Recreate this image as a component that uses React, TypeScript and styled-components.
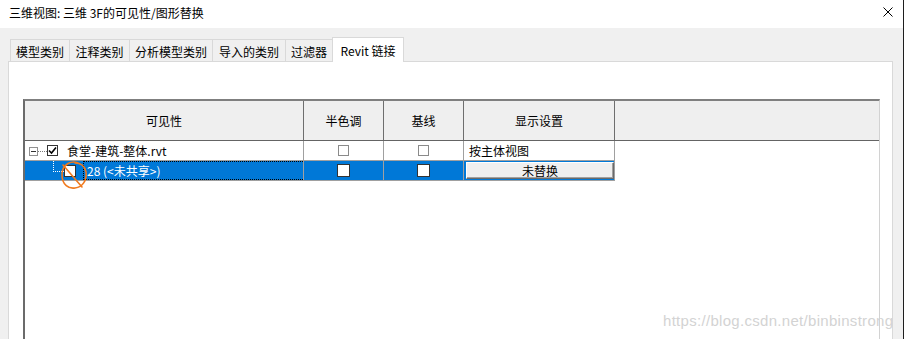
import React from 'react';
import styled, { createGlobalStyle } from 'styled-components';

const GlobalStyle = createGlobalStyle`
  html, body {
    margin: 0;
    padding: 0;
    background: #ffffff;
  }
  body {
    font-family: "Noto Sans CJK SC", "Liberation Sans", sans-serif;
    font-size: 12px;
    color: #000000;
  }
  * {
    box-sizing: border-box;
  }
`;

const COLS = '279px 80px 80px 151px 1fr';

const Window = styled.div`
  position: relative;
  width: 904px;
  height: 339px;
  display: flex;
  flex-direction: column;
  overflow: hidden;
  border-right: 1px solid #1e1e1e;
`;

const TitleBar = styled.div`
  height: 28px;
  flex-shrink: 0;
  display: flex;
  align-items: center;
  justify-content: space-between;
  padding: 0 10px 0 9px;
  background: #ffffff;
`;

const Title = styled.span`
  font-size: 12px;
  line-height: 1;
  margin-top: -2px;
`;

const CloseIcon = styled.svg`
  width: 10px;
  height: 10px;
  margin-top: -4px;
`;

const Body = styled.div`
  flex: 1;
  min-height: 0;
  display: flex;
  flex-direction: column;
  background: #f0f0f0;
  padding: 9px 10px 0 8px;
`;

const TabRow = styled.div`
  height: 25px;
  display: flex;
  align-items: flex-end;
  padding-left: 2px;
  margin-bottom: -1px;
  position: relative;
  z-index: 1;
`;

const Tab = styled.div<{ $width: number; $active?: boolean }>`
  width: ${p => p.$width}px;
  height: ${p => (p.$active ? 25 : 23)}px;
  margin-left: -1px;
  display: flex;
  align-items: center;
  justify-content: center;
  padding-top: ${p => (p.$active ? 0 : 1)}px;
  background: ${p => (p.$active ? '#ffffff' : '#f0f0f0')};
  border: 1px solid #d9d9d9;
  border-bottom: ${p => (p.$active ? 'none' : '1px solid #d9d9d9')};
  font-size: 12px;
  white-space: nowrap;
  &:first-child {
    margin-left: 0;
  }
`;

const Panel = styled.div`
  flex: 1;
  min-height: 0;
  display: flex;
  flex-direction: column;
  background: #ffffff;
  border: 1px solid #d9d9d9;
  border-bottom: none;
  padding: 37px 12px 0 14px;
`;

const Table = styled.div`
  flex: 1;
  display: flex;
  flex-direction: column;
  border-top: 2px solid #7f7f7f;
  border-left: 2px solid #6b6b6b;
  border-right: 1px solid #d2d2d2;
`;

const HeaderRow = styled.div`
  display: grid;
  grid-template-columns: ${COLS};
  height: 40px;
  background: #efefef;
  border-bottom: 1px solid #646464;
`;

const HeaderCell = styled.div<{ $last?: boolean }>`
  display: flex;
  align-items: center;
  justify-content: center;
  border-right: ${p => (p.$last ? 'none' : '1px solid #6e6e6e')};
  font-size: 12px;
`;

const Row = styled.div`
  display: grid;
  grid-template-columns: ${COLS};
  height: 20px;
`;

const Cell = styled.div<{ $selected?: boolean; $align?: 'left' | 'center' }>`
  display: flex;
  align-items: center;
  justify-content: ${p => (p.$align === 'center' ? 'center' : 'flex-start')};
  background: ${p => (p.$selected ? '#0078d7' : '#ffffff')};
  color: ${p => (p.$selected ? '#ffffff' : '#000000')};
  border-right: 1px solid #a0a0a0;
  border-bottom: 1px solid #a0a0a0;
  white-space: nowrap;
  font-size: 12px;
`;

const EmptyCell = styled.div`
  background: #ffffff;
`;

const TreeCell = styled(Cell)`
  padding-left: 4px;
`;

const Expander = styled.div`
  width: 9px;
  height: 9px;
  border: 1px solid #919191;
  background: #ffffff;
  position: relative;
  margin-top: 1px;
  &::after {
    content: '';
    position: absolute;
    left: 1px;
    right: 1px;
    top: 3px;
    height: 1px;
    background: #333333;
  }
`;

const DotLine = styled.div`
  width: 9px;
  height: 0;
  border-top: 1px dotted #7a7a7a;
  margin-top: 1px;
`;

const Branch = styled.div`
  align-self: flex-start;
  width: 11px;
  height: 11px;
  margin-left: 28px;
  border-left: 1px dotted #ffffff;
  border-bottom: 1px dotted #ffffff;
`;

const CheckBox = styled.div<{ $dark?: boolean; $size?: number }>`
  width: ${p => p.$size ?? 11}px;
  height: ${p => p.$size ?? 11}px;
  border: 1px solid ${p => (p.$dark ? '#333333' : '#8a8a8a')};
  background: #ffffff;
  display: flex;
  align-items: center;
  justify-content: center;
  flex-shrink: 0;
`;

const FileName = styled.span`
  margin-left: 9px;
`;

const FocusLabel = styled.div`
  flex: 1;
  align-self: stretch;
  margin-left: 7px;
  border: 1px dotted #000000;
  border-right: none;
  padding-left: 3px;
  display: flex;
  align-items: center;
`;

const DisplayText = styled.span`
  padding-left: 5px;
`;

const OverrideButton = styled.div`
  width: 148px;
  height: 17px;
  margin-left: 2px;
  margin-top: 1px;
  align-self: flex-start;
  display: flex;
  align-items: center;
  justify-content: center;
  background: #efefef;
  color: #000000;
  border: 1px solid;
  border-color: #ffffff #6a6a6a #6a6a6a #ffffff;
  box-shadow: inset -1px -1px 0 #a0a0a0;
  font-size: 12px;
`;

const Annotation = styled.svg`
  position: absolute;
  left: 58px;
  top: 158px;
  width: 32px;
  height: 34px;
  pointer-events: none;
`;

const Watermark = styled.div`
  position: absolute;
  left: 663px;
  top: 312px;
  font-family: "Liberation Sans", Arial, sans-serif;
  font-size: 15px;
  letter-spacing: 0.3px;
  color: #d3d3d3;
  white-space: nowrap;
  pointer-events: none;
`;

const tabs = [
  { label: '模型类别', width: 60 },
  { label: '注释类别', width: 61 },
  { label: '分析模型类别', width: 84 },
  { label: '导入的类别', width: 74 },
  { label: '过滤器', width: 48 },
  { label: 'Revit 链接', width: 72, active: true },
];

const Check = () => (
  <svg width="9" height="9" viewBox="0 0 9 9">
    <path d="M1 4.5 L3.5 7 L8 1.5" fill="none" stroke="#000" strokeWidth="1.6" />
  </svg>
);

const App: React.FC = () => {
  return (
    <>
      <GlobalStyle />
      <Window>
        <TitleBar>
          <Title>三维视图: 三维 3F的可见性/图形替换</Title>
          <CloseIcon viewBox="0 0 10 10">
            <path d="M0.5 0.5 L9.5 9.5 M9.5 0.5 L0.5 9.5" stroke="#000" strokeWidth="1" />
          </CloseIcon>
        </TitleBar>

        <Body>
          <TabRow>
            {tabs.map(t => (
              <Tab key={t.label} $width={t.width} $active={t.active}>
                {t.label}
              </Tab>
            ))}
          </TabRow>

          <Panel>
            <Table>
              <HeaderRow>
                <HeaderCell>可见性</HeaderCell>
                <HeaderCell>半色调</HeaderCell>
                <HeaderCell>基线</HeaderCell>
                <HeaderCell>显示设置</HeaderCell>
                <HeaderCell $last />
              </HeaderRow>

              {/* linked model */}
              <Row>
                <TreeCell>
                  <Expander />
                  <DotLine />
                  <CheckBox $dark>
                    <Check />
                  </CheckBox>
                  <FileName>食堂-建筑-整体.rvt</FileName>
                </TreeCell>
                <Cell $align="center">
                  <CheckBox />
                </Cell>
                <Cell $align="center">
                  <CheckBox />
                </Cell>
                <Cell>
                  <DisplayText>按主体视图</DisplayText>
                </Cell>
                <EmptyCell />
              </Row>

              {/* instance, selected */}
              <Row>
                <Cell $selected>
                  <Branch />
                  <CheckBox $dark $size={12} />
                  <FocusLabel>28 (&lt;未共享&gt;)</FocusLabel>
                </Cell>
                <Cell $selected $align="center">
                  <CheckBox $dark $size={13} />
                </Cell>
                <Cell $selected $align="center">
                  <CheckBox $dark $size={13} />
                </Cell>
                <Cell $selected>
                  <OverrideButton>未替换</OverrideButton>
                </Cell>
                <EmptyCell />
              </Row>
            </Table>
          </Panel>
        </Body>

        <Annotation viewBox="0 0 32 34">
          <path
            d="M22 6 C14 1, 4 6, 4 17 C4 27, 11 31, 17 30 C25 29, 29 22, 28 14 C27 9, 24 5, 17 5"
            fill="none"
            stroke="#f07a1e"
            strokeWidth="1.6"
            strokeLinecap="round"
          />
          <path d="M5 7 L24 29" stroke="#f07a1e" strokeWidth="1.6" strokeLinecap="round" />
        </Annotation>

        <Watermark>https://blog.csdn.net/binbinstrong</Watermark>
      </Window>
    </>
  );
};

export default App;
